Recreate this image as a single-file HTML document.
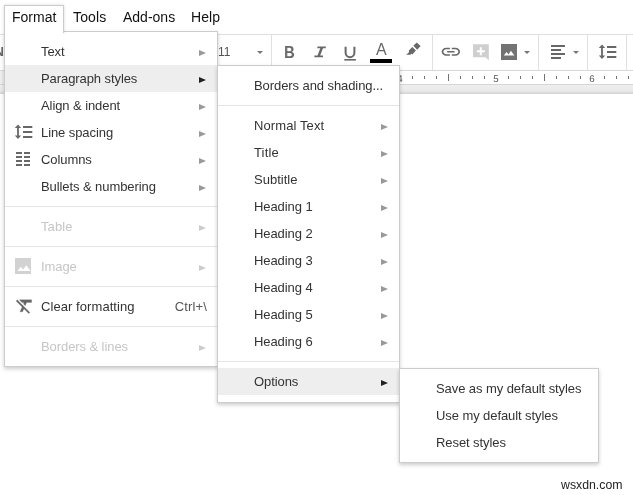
<!DOCTYPE html>
<html><head><meta charset="utf-8">
<style>
html,body{margin:0;padding:0;}
body{width:633px;height:495px;overflow:hidden;background:#fff;position:relative;font-family:"Liberation Sans",sans-serif;font-size:13px;color:#333;}
.abs{position:absolute;}
.g{will-change:transform;}
.mb{will-change:transform;position:absolute;top:8px;font-size:14px;color:#111;line-height:18px;}
.menu{will-change:transform;position:absolute;background:#fff;border:1px solid #ccc;box-shadow:0 2px 4px rgba(0,0,0,.2);box-sizing:border-box;}
.it{position:absolute;left:0;right:0;height:27px;line-height:27px;font-size:13px;color:#333;white-space:nowrap;letter-spacing:-0.08px;}
.it.dis{color:#c6c6c6;}
.it.hl{background:#eee;}
.it span.t{position:absolute;left:36px;}
.ar{position:absolute;right:11px;top:12px;width:0;height:0;border-left:7px solid #999;border-top:3px solid transparent;border-bottom:3px solid transparent;}
.it.hl .ar{border-left-color:#222;}
.it.dis .ar{border-left-color:#ccc;}
.sep{position:absolute;left:0;right:0;height:1px;background:#e5e5e5;}
.vs{position:absolute;top:35px;width:1px;height:35px;background:#e0e0e0;}
.rn{will-change:transform;top:74px;width:20px;text-align:center;font-size:9.700px;line-height:12px;color:#555;text-rendering:geometricPrecision;}
.dd{position:absolute;top:51px;width:0;height:0;border-top:3px solid #777;border-left:3px solid transparent;border-right:3px solid transparent;}
svg{position:absolute;left:0;top:0;overflow:visible;}
</style></head><body>
<!-- toolbar borders -->
<div class="abs" style="left:0;top:34px;width:633px;height:1px;background:#e0e0e0"></div>
<div class="abs" style="left:0;top:70px;width:633px;height:1px;background:#d8d8d8"></div>
<!-- ruler -->
<div class="abs" style="left:0;top:71px;width:5px;height:13px;background:#eee"></div>
<div class="abs" style="left:0;top:84px;width:633px;height:1px;background:#d6d6d6"></div>
<div class="abs" style="left:0;top:85px;width:633px;height:9px;background:linear-gradient(#efefef,#e9e9e9 65%,#d2d2d2)"></div>
<div class="abs" style="left:412px;top:76px;width:1px;height:3px;background:#757575"></div>
<div class="abs" style="left:424px;top:76px;width:1px;height:3px;background:#757575"></div>
<div class="abs" style="left:436px;top:76px;width:1px;height:3px;background:#757575"></div>
<div class="abs" style="left:448px;top:74px;width:1px;height:7px;background:#757575"></div>
<div class="abs" style="left:460px;top:76px;width:1px;height:3px;background:#757575"></div>
<div class="abs" style="left:472px;top:76px;width:1px;height:3px;background:#757575"></div>
<div class="abs" style="left:484px;top:76px;width:1px;height:3px;background:#757575"></div>
<div class="abs" style="left:508px;top:76px;width:1px;height:3px;background:#757575"></div>
<div class="abs" style="left:520px;top:76px;width:1px;height:3px;background:#757575"></div>
<div class="abs" style="left:532px;top:76px;width:1px;height:3px;background:#757575"></div>
<div class="abs" style="left:544px;top:74px;width:1px;height:7px;background:#757575"></div>
<div class="abs" style="left:556px;top:76px;width:1px;height:3px;background:#757575"></div>
<div class="abs" style="left:568px;top:76px;width:1px;height:3px;background:#757575"></div>
<div class="abs" style="left:580px;top:76px;width:1px;height:3px;background:#757575"></div>
<div class="abs" style="left:604px;top:76px;width:1px;height:3px;background:#757575"></div>
<div class="abs" style="left:616px;top:76px;width:1px;height:3px;background:#757575"></div>
<div class="abs" style="left:628px;top:76px;width:1px;height:3px;background:#757575"></div>
<div class="abs rn" style="left:390px;">4</div><div class="abs rn" style="left:486px;">5</div><div class="abs rn" style="left:582px;">6</div>
<!-- toolbar content -->
<div class="abs g" style="left:0;top:44px;font-size:13px;font-weight:bold;color:#666;width:4px;overflow:hidden;direction:rtl">N</div>
<div class="abs g" style="left:217.500px;top:44px;font-size:12px;line-height:16px;color:#555;">11</div>
<i class="dd" style="left:256.500px"></i>
<i class="vs" style="left:271px"></i>
<div class="abs g" style="left:284px;top:43px;font-size:16.500px;line-height:18px;font-weight:bold;transform-origin:0 0;transform:scaleX(0.9);color:#686868;">B</div>
<i class="vs" style="left:432px"></i>
<i class="vs" style="left:538px"></i>
<i class="vs" style="left:587px"></i>
<i class="vs" style="left:626px"></i>
<svg width="633" height="495" viewBox="0 0 633 495">
 <!-- italic -->
 <path d="M317.4 46.5H325.8V48.3H323L320.2 55.4H323V57.2H314.400V55.400H317.500L320.300 48.300H317.400Z" fill="#686868"/>
 <!-- underline -->
 <path d="M345.600 46.700v6.100a4.400 4.400 0 0 0 8.800 0v-6.100" fill="none" stroke="#686868" stroke-width="2"/>
 <rect x="344.3" y="59" width="11.6" height="1.6" fill="#686868"/>
 <!-- A color -->
 <rect x="370" y="59" width="22" height="4" fill="#000"/>
 <!-- highlighter -->
 <path d="M413.400 45.800l3.300-3.400 3.900 3.600-3.400 3.800z" fill="#686868"/>
 <path d="M412.300 47L415.900 50.600L412.300 54.500L411.500 53.700L410.400 54.800L406.200 54.800L409.200 52L408.800 50.600Z" fill="#686868"/>
 <!-- link -->
 <g transform="translate(439.800,42.150) scale(0.92,0.8)" fill="#686868"><path d="M3.9 12c0-1.71 1.39-3.1 3.1-3.1h4V7H7c-2.76 0-5 2.24-5 5s2.24 5 5 5h4v-1.900H7c-1.71 0-3.1-1.390-3.1-3.100zM8 13h8v-2H8v2zm9-6h-4v1.900h4c1.71 0 3.100 1.390 3.100 3.100s-1.390 3.100-3.100 3.100h-4V17h4c2.760 0 5-2.240 5-5s-2.240-5-5-5z"/></g>
 <!-- comment -->
 <path d="M473 44.200h15.800v16.300l-3.200-3.200H473z" fill="#cfcfcf"/>
 <path d="M479.800 47.300h2v3h3v2h-3v3h-2v-3h-3v-2h3z" fill="#fff"/>
 <!-- image -->
 <rect x="501" y="44" width="16" height="16" fill="#737373"/>
 <path d="M503.800 55.500l2.800-3.400 1.900 2.300 2.400-3.700 3.500 4.800z" fill="#fff"/>
 <!-- align -->
 <g fill="#686868"><rect x="551" y="45" width="14" height="2"/><rect x="551" y="49" width="10" height="2"/><rect x="551" y="53" width="14" height="2"/><rect x="551" y="57" width="10" height="2"/></g>
 <!-- line spacing toolbar -->
 <g id="ls" fill="#686868"><path d="M602 44.500l3.200 3.500h-2.300v7.600h2.300l-3.200 3.500-3.200-3.500h2.300v-7.600h-2.300z"/><rect x="607" y="46" width="9.300" height="2"/><rect x="607" y="51" width="9.300" height="2"/><rect x="607" y="56" width="9.300" height="2"/></g>
</svg>
<div class="abs g" style="left:375.700px;top:41px;font-size:16px;line-height:18px;color:#686868;">A</div>
<i class="dd" style="left:524px"></i>
<i class="dd" style="left:573px"></i>

<!-- menubar -->
<div class="abs" style="left:4px;top:5px;width:60px;height:28px;border:1px solid #ccc;border-bottom:none;box-sizing:border-box;background:#fff;z-index:5;box-shadow:0 0 3px rgba(0,0,0,.15)"></div>
<div class="abs" style="left:5px;top:30px;width:58px;height:6px;background:#fff;z-index:5"></div>
<div class="mb" style="left:12px;z-index:6">Format</div>
<div class="mb" style="left:72.500px;letter-spacing:0.15px">Tools</div>
<div class="mb" style="left:123px">Add-ons</div>
<div class="mb" style="left:190.500px;letter-spacing:0.1px">Help</div>

<!-- format menu -->
<div class="menu" style="left:4px;top:31px;width:214px;height:336px;z-index:4">
 <div class="it" style="top:6px"><span class="t">Text</span><i class="ar"></i></div>
 <div class="it hl" style="top:33px"><span class="t">Paragraph styles</span><i class="ar"></i></div>
 <div class="it" style="top:60px"><span class="t">Align &amp; indent</span><i class="ar"></i></div>
 <div class="it" style="top:87px"><span class="t">Line spacing</span><i class="ar"></i></div>
 <div class="it" style="top:114px"><span class="t">Columns</span><i class="ar"></i></div>
 <div class="it" style="top:141px"><span class="t">Bullets &amp; numbering</span><i class="ar"></i></div>
 <div class="sep" style="top:174px"></div>
 <div class="it dis" style="top:181px"><span class="t" style="letter-spacing:0.12px">Table</span><i class="ar"></i></div>
 <div class="sep" style="top:214px"></div>
 <div class="it dis" style="top:221px"><span class="t">Image</span><i class="ar"></i></div>
 <div class="sep" style="top:254px"></div>
 <div class="it" style="top:261px"><span class="t" style="letter-spacing:0.07px">Clear formatting</span><span style="position:absolute;right:10px;letter-spacing:0.15px;color:#555">Ctrl+\</span></div>
 <div class="sep" style="top:294px"></div>
 <div class="it dis" style="top:301px"><span class="t">Borders &amp; lines</span><i class="ar"></i></div>
 <svg width="214" height="336" viewBox="5 32 214 336">
  <g fill="#686868" transform="translate(-584,80)"><path d="M602 44.500l3.200 3.500h-2.300v7.600h2.300l-3.200 3.500-3.200-3.500h2.300v-7.600h-2.300z"/><rect x="607" y="46" width="9.300" height="2"/><rect x="607" y="51" width="9.300" height="2"/><rect x="607" y="56" width="9.300" height="2"/></g>
  <g fill="#686868"><rect x="16" y="152" width="6" height="2"/><rect x="16" y="156" width="6" height="2"/><rect x="16" y="160" width="6" height="2"/><rect x="16" y="164" width="6" height="2"/><rect x="24" y="152" width="6" height="2"/><rect x="24" y="156" width="6" height="2"/><rect x="24" y="160" width="6" height="2"/><rect x="24" y="164" width="6" height="2"/></g>
  <rect x="15" y="258" width="16" height="16" fill="#d2d2d2"/>
  <path d="M17.500 271l3.300-4.300 2.300 2.800 3.200-4.200 4.300 5.700z" fill="#fff"/>
  <g transform="translate(14.400,295.500) scale(0.86)" fill="#666" stroke="#666" stroke-width="0.3"><path d="M3.270 5L2 6.270l6.970 6.970L6.500 19h3l1.570-3.660L16.730 21 18 19.730 3.550 5.270 3.270 5zM6 5v.18L8.820 8h2.400l-.72 1.680 2.100 2.100L14.210 8H20V5H6z"/></g>
 </svg>
</div>

<!-- paragraph styles submenu -->
<div class="menu" style="left:217px;top:65px;width:183px;height:338px;z-index:7">
 <div class="it" style="top:6px"><span class="t">Borders and shading...</span></div>
 <div class="sep" style="top:39px"></div>
 <div class="it" style="top:46px"><span class="t" style="letter-spacing:0.1px">Normal Text</span><i class="ar"></i></div>
 <div class="it" style="top:73px"><span class="t" style="letter-spacing:0.15px">Title</span><i class="ar"></i></div>
 <div class="it" style="top:100px"><span class="t" style="letter-spacing:0px">Subtitle</span><i class="ar"></i></div>
 <div class="it" style="top:127px"><span class="t">Heading 1</span><i class="ar"></i></div>
 <div class="it" style="top:154px"><span class="t">Heading 2</span><i class="ar"></i></div>
 <div class="it" style="top:181px"><span class="t">Heading 3</span><i class="ar"></i></div>
 <div class="it" style="top:208px"><span class="t">Heading 4</span><i class="ar"></i></div>
 <div class="it" style="top:235px"><span class="t">Heading 5</span><i class="ar"></i></div>
 <div class="it" style="top:262px"><span class="t">Heading 6</span><i class="ar"></i></div>
 <div class="sep" style="top:295px"></div>
 <div class="it hl" style="top:302px"><span class="t">Options</span><i class="ar"></i></div>
</div>

<!-- options submenu -->
<div class="menu" style="left:399px;top:368px;width:200px;height:95px;z-index:8">
 <div class="it" style="top:6px"><span class="t">Save as my default styles</span></div>
 <div class="it" style="top:33px"><span class="t">Use my default styles</span></div>
 <div class="it" style="top:60px"><span class="t">Reset styles</span></div>
</div>

<div class="abs g" style="left:560.5px;top:478px;font-size:12.300px;line-height:14px;color:#222;">wsxdn.com</div>
</body></html>
